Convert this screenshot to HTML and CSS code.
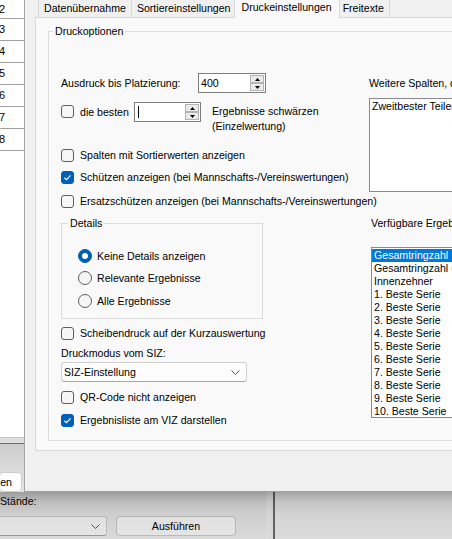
FILE: index.html
```html
<!DOCTYPE html>
<html lang="de">
<head>
<meta charset="utf-8">
<title>Druckeinstellungen</title>
<link rel="stylesheet" href="styles.css">
</head>
<body>
<div class="screen">
  <div class="main">
    <div class="left-pane">
      <div class="grid">
        <div class="grow first">2</div>
        <div class="grow">3</div>
        <div class="grow">4</div>
        <div class="grow">5</div>
        <div class="grow">6</div>
        <div class="grow">7</div>
        <div class="grow">8</div>
      </div>
      <div class="hscroll"></div>
      <div class="lower">
        <div class="btn btn-en">en</div>
        <div class="lbl-st">Stände:</div>
        <div class="exec-row">
          <div class="combo combo-st"><span class="combo-text"></span><svg class="chev" width="9" height="5" viewBox="0 0 9 5"><polyline points="0.5,0.5 4.5,4.5 8.5,0.5" fill="none" stroke="#5a5a5a" stroke-width="1"/></svg></div>
          <div class="btn btn-exec">Ausführen</div>
        </div>
      </div>
    </div>
    <div class="splitter"></div>
    <div class="right-pane"></div>
  </div>

  <div class="dialog">
    <div class="tabs">
      <div class="tab first">Datenübernahme</div>
      <div class="tab">Sortiereinstellungen</div>
      <div class="tab active">Druckeinstellungen</div>
      <div class="tab">Freitexte</div>
    </div>
    <div class="page">
      <fieldset class="group main-group">
        <legend>Druckoptionen</legend>
        <div class="opts">
          <div class="col-left">
            <div class="row r-ausdruck">
              <span class="lbl-ausdruck">Ausdruck bis Platzierung:</span>
              <div class="spin spin1">
                <span class="spin-val">400</span>
                <div class="spin-btns">
                  <span class="spin-btn"><svg width="5" height="3" viewBox="0 0 5 3"><polygon points="0,3 2.5,0 5,3" fill="#000"/></svg></span>
                  <span class="spin-btn"><svg width="5" height="3" viewBox="0 0 5 3"><polygon points="0,0 5,0 2.5,3" fill="#000"/></svg></span>
                </div>
              </div>
            </div>
            <div class="row r-besten">
              <span class="cb cb-top"></span>
              <span class="cb-text lbl-besten">die besten</span>
              <div class="spin spin2">
                <span class="spin-val"><span class="caret"></span></span>
                <div class="spin-btns">
                  <span class="spin-btn"><svg width="5" height="3" viewBox="0 0 5 3"><polygon points="0,3 2.5,0 5,3" fill="#000"/></svg></span>
                  <span class="spin-btn"><svg width="5" height="3" viewBox="0 0 5 3"><polygon points="0,0 5,0 2.5,3" fill="#000"/></svg></span>
                </div>
              </div>
              <div class="note">Ergebnisse schwärzen<br>(Einzelwertung)</div>
            </div>
            <div class="cbrow r-spalten"><span class="cb"></span><span class="cb-text">Spalten mit Sortierwerten anzeigen</span></div>
            <div class="cbrow r-schuetzen"><span class="cb on"><svg width="11" height="11" viewBox="0 0 11 11"><polyline points="2.4,5.7 4.5,7.7 8.6,3.4" fill="none" stroke="#fff" stroke-width="1.2"/></svg></span><span class="cb-text">Schützen anzeigen (bei Mannschafts-/Vereinswertungen)</span></div>
            <div class="cbrow r-ersatz"><span class="cb"></span><span class="cb-text">Ersatzschützen anzeigen (bei Mannschafts-/Vereinswertungen)</span></div>
            <fieldset class="group details">
              <legend>Details</legend>
              <div class="radios">
                <div class="rbrow"><span class="rb on"></span><span class="rb-text">Keine Details anzeigen</span></div>
                <div class="rbrow r2"><span class="rb"></span><span class="rb-text">Relevante Ergebnisse</span></div>
                <div class="rbrow r3"><span class="rb"></span><span class="rb-text">Alle Ergebnisse</span></div>
              </div>
            </fieldset>
            <div class="cbrow r-scheibe"><span class="cb"></span><span class="cb-text">Scheibendruck auf der Kurzauswertung</span></div>
            <div class="lbl-modus">Druckmodus vom SIZ:</div>
            <div class="combo combo-siz"><span class="combo-text">SIZ-Einstellung</span><svg class="chev" width="9" height="5" viewBox="0 0 9 5"><polyline points="0.5,0.5 4.5,4.5 8.5,0.5" fill="none" stroke="#5a5a5a" stroke-width="1"/></svg></div>
            <div class="cbrow r-qr"><span class="cb"></span><span class="cb-text">QR-Code nicht anzeigen</span></div>
            <div class="cbrow r-viz"><span class="cb on"><svg width="11" height="11" viewBox="0 0 11 11"><polyline points="2.4,5.7 4.5,7.7 8.6,3.4" fill="none" stroke="#fff" stroke-width="1.2"/></svg></span><span class="cb-text">Ergebnisliste am VIZ darstellen</span></div>
          </div>
          <div class="col-right">
            <div class="lbl-r">Weitere Spalten, die gedruckt werden:</div>
            <div class="textbox">Zweitbester Teiler</div>
            <div class="lbl-r lbl-verf">Verfügbare Ergebnisse:</div>
            <div class="listbox">
              <div class="li sel">Gesamtringzahl</div>
              <div class="li">Gesamtringzahl (Zehntel)</div>
              <div class="li">Innenzehner</div>
              <div class="li">1. Beste Serie</div>
              <div class="li">2. Beste Serie</div>
              <div class="li">3. Beste Serie</div>
              <div class="li">4. Beste Serie</div>
              <div class="li">5. Beste Serie</div>
              <div class="li">6. Beste Serie</div>
              <div class="li">7. Beste Serie</div>
              <div class="li">8. Beste Serie</div>
              <div class="li">9. Beste Serie</div>
              <div class="li">10. Beste Serie</div>
            </div>
          </div>
        </div>
      </fieldset>
    </div>
  </div>
  <div class="shadow-bottom"></div>
</div>
</body>
</html>
```
FILE: styles.css
```css
* { box-sizing: border-box; }
html, body { margin: 0; padding: 0; }
body {
  width: 452px;
  height: 539px;
  overflow: hidden;
  background: #f0f0f0;
  font-family: "Liberation Sans", Arial, sans-serif;
  font-size: 10.6px;
  color: #000;
}
.screen { position: relative; width: 452px; height: 539px; overflow: hidden; }

/* main window behind the dialog */
.main { display: flex; height: 539px; }
.left-pane { width: 267px; flex: none; display: flex; flex-direction: column; }
.grid { height: 437px; background: #fff; flex: none; }
.grow {
  height: 22px;
  line-height: 21px;
  border-bottom: 1px solid #a0a0a0;
  font-size: 11px;
  text-indent: -1px;
}
.grow.first { height: 19px; line-height: 18px; }
.hscroll {
  height: 7px;
  flex: none;
  background: #dedede;
  border-top: 1px solid #c4c4c4;
  border-bottom: 1px solid #6e6e6e;
}
.lower {
  flex: 1;
  display: flex;
  flex-direction: column;
  align-items: flex-start;
  background: linear-gradient(#cdcdcd 0px, #dadada 26px, #e6e6e6 48px, #f0f0f0 95px);
}
.btn {
  height: 20px;
  line-height: 18px;
  border: 1px solid #cccccc;
  border-radius: 4px;
  background: #fdfdfd;
  white-space: nowrap;
}
.btn-en { margin-top: 28px; margin-left: -1px; width: 23px; text-align: right; padding-right: 9px; }
.lbl-st { margin-top: 2px; line-height: 14px; }
.exec-row { display: flex; gap: 9px; margin-top: 8px; }
.combo-st { width: 111px; margin-left: -4px; }
.btn-exec { width: 120px; text-align: center; }
.splitter {
  width: 8px;
  flex: none;
  border-left: 1px solid #f6f6f6;
  border-right: 2px solid #6d6d6d;
}
.right-pane { flex: 1; background: #f0f0f0; }

/* combo */
.combo {
  display: flex;
  align-items: center;
  justify-content: space-between;
  height: 20px;
  border: 1px solid #d0d0d0;
  border-bottom-color: #a8a8a8;
  border-radius: 3px;
  background: #fdfdfd;
  padding: 0 6px 0 2px;
  white-space: nowrap;
}
.chev { flex: none; }

/* dialog */
.dialog {
  position: absolute;
  left: 24px;
  top: 0;
  width: 440px;
  height: 492px;
  background: #f0f0f0;
  border-left: 1px solid #a3a3a3;
  border-bottom: 1px solid #a3a3a3;
  padding-left: 10px;
  display: flex;
  flex-direction: column;
}
.tabs { display: flex; align-items: flex-end; height: 17px; padding-left: 3px; flex: none; }
.tab {
  height: 19px;
  line-height: 18px;
  padding: 0 5px;
  border: 1px solid #d9d9d9;
  border-bottom: none;
  margin-left: -1px;
  background: #f0f0f0;
  white-space: nowrap;
}
.tab.first { margin-left: 0; }
.tab.active {
  position: relative;
  z-index: 1;
  height: 22px;
  line-height: 20px;
  margin: 0 -2px -1px -3px;
  padding: 0 7px;
  background: #f9f9f9;
}
.page {
  height: 434px;
  flex: none;
  border: 1px solid #d9d9d9;
  border-right: none;
  background: #f9f9f9;
  padding: 6px 0 0 12px;
}

/* group boxes */
.group { margin: 0; padding: 0; border: 1px solid #dcdcdc; min-width: 0; }
.group legend { padding: 0 2px; line-height: 14px; font-size: 10.6px; white-space: nowrap; }
.main-group { width: 420px; height: 417px; }
.main-group > legend { margin-left: 4px; }
.opts { display: flex; padding: 35px 0 0 12px; }
.col-left { width: 308px; flex: none; display: flex; flex-direction: column; align-items: flex-start; }
.col-right { width: 160px; flex: none; display: flex; flex-direction: column; padding-top: 3px; }

.row { display: flex; align-items: center; white-space: nowrap; }
.r-ausdruck { height: 20px; }
.lbl-ausdruck { width: 137px; }
.r-besten { margin-top: 9px; align-items: flex-start; }
.cb-top { margin-top: 3px; }
.lbl-besten { width: 54px; line-height: 20px; }
.note { margin-left: 11px; padding-top: 2px; line-height: 15px; }

/* spinner */
.spin { display: flex; height: 20px; border: 1px solid #7d7d7d; background: #fff; }
.spin1 { width: 68px; }
.spin2 { width: 67px; }
.spin-val { flex: 1; padding-left: 2px; line-height: 18px; display: flex; align-items: center; }
.caret { width: 1px; height: 12px; background: #000; margin-left: 1px; }
.spin-btns { width: 15px; display: flex; flex-direction: column; padding: 1px 1px 1px 0; }
.spin-btn {
  flex: 1;
  border: 1px solid #b4b4b4;
  background: #eaeaea;
  display: flex;
  align-items: center;
  justify-content: center;
}

/* checkbox */
.cbrow { display: flex; align-items: center; height: 18px; white-space: nowrap; }
.cb {
  width: 13px;
  height: 13px;
  flex: none;
  border: 1px solid #5e5e5e;
  border-radius: 3px;
  background: #f6f6f6;
  display: flex;
  align-items: center;
  justify-content: center;
}
.cb.on { background: #005fb8; border-color: #005fb8; }
.cb-text { margin-left: 6px; }
.r-spalten { margin-top: 12px; }
.r-schuetzen { margin-top: 4px; }
.r-ersatz { margin-top: 6px; }

/* details */
.details { width: 202px; height: 103px; margin-top: 6px; }
.details > legend { margin-left: 6px; }
.radios { padding: 17px 0 0 16px; }
.rbrow { display: flex; align-items: center; height: 18px; white-space: nowrap; }
.rbrow.r2 { margin-top: 4px; }
.rbrow.r3 { margin-top: 5px; }
.rb {
  width: 14px;
  height: 14px;
  flex: none;
  border-radius: 50%;
  border: 1px solid #5e5e5e;
  background: #f6f6f6;
  display: flex;
  align-items: center;
  justify-content: center;
}
.rb.on { background: #005fb8; border-color: #005fb8; }
.rb.on::after { content: ""; width: 6px; height: 6px; border-radius: 50%; background: #fff; }
.rb-text { margin-left: 5px; }

.r-scheibe { margin-top: 5px; }
.lbl-modus { margin-top: 4px; line-height: 14px; white-space: nowrap; }
.combo-siz { width: 186px; margin-top: 2px; }
.r-qr { margin-top: 6px; }
.r-viz { margin-top: 5px; }

/* right column */
.lbl-r { line-height: 14px; white-space: nowrap; }
.textbox {
  margin-top: 8px;
  height: 94px;
  border: 1px solid #8a8a8a;
  background: #fff;
  padding: 0 2px;
  line-height: 14px;
  white-space: nowrap;
  overflow: hidden;
}
.lbl-verf { margin-top: 24px; margin-left: 2px; }
.listbox {
  margin-top: 17px;
  margin-left: 2px;
  height: 171px;
  border: 1px solid #8a8a8a;
  background: #fff;
  padding-top: 1px;
  overflow: hidden;
}
.li { line-height: 13px; height: 13px; padding-left: 2px; white-space: nowrap; }
.li.sel { background: #0078d7; color: #fff; }

/* dialog drop shadow over the main window */
.shadow-bottom {
  position: absolute;
  left: 0;
  top: 492px;
  width: 452px;
  height: 47px;
  pointer-events: none;
  background: linear-gradient(rgba(0,0,0,0.32) 0px, rgba(0,0,0,0.18) 10px, rgba(0,0,0,0.12) 22px, rgba(0,0,0,0.09) 47px);
}
```
